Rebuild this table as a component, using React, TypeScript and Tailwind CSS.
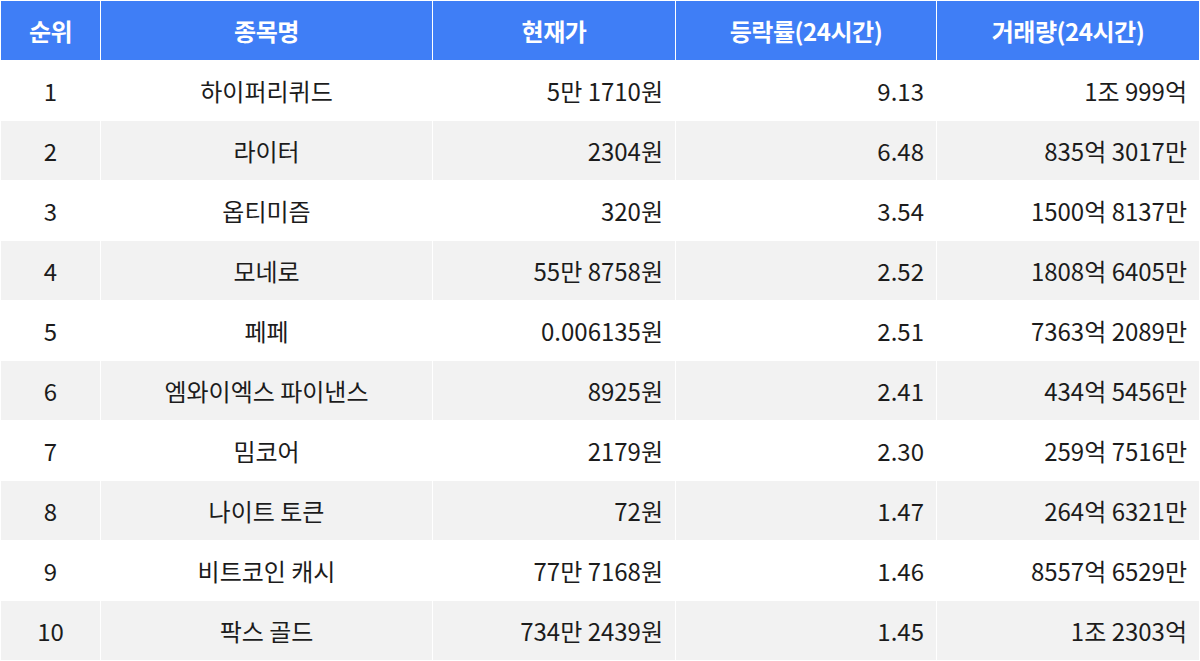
const rows = [
  { rank: 1, name: "하이퍼리퀴드", price: "5만 1710원", change: "9.13", volume: "1조 999억" },
  { rank: 2, name: "라이터", price: "2304원", change: "6.48", volume: "835억 3017만" },
  { rank: 3, name: "옵티미즘", price: "320원", change: "3.54", volume: "1500억 8137만" },
  { rank: 4, name: "모네로", price: "55만 8758원", change: "2.52", volume: "1808억 6405만" },
  { rank: 5, name: "페페", price: "0.006135원", change: "2.51", volume: "7363억 2089만" },
  { rank: 6, name: "엠와이엑스 파이낸스", price: "8925원", change: "2.41", volume: "434억 5456만" },
  { rank: 7, name: "밈코어", price: "2179원", change: "2.30", volume: "259억 7516만" },
  { rank: 8, name: "나이트 토큰", price: "72원", change: "1.47", volume: "264억 6321만" },
  { rank: 9, name: "비트코인 캐시", price: "77만 7168원", change: "1.46", volume: "8557억 6529만" },
  { rank: 10, name: "팍스 골드", price: "734만 2439원", change: "1.45", volume: "1조 2303억" },
];

const headers = ["순위", "종목명", "현재가", "등락률(24시간)", "거래량(24시간)"];
const grid = "grid grid-cols-[99px_331px_242px_260px_1fr] gap-px px-px";

export default function App() {
  return (
    <div
      className="flex h-[661px] w-[1200px] flex-col gap-px bg-white pt-px text-[24px] text-[#1c1c1c]"
      style={{ fontFamily: '"Noto Sans CJK KR", "Noto Sans", sans-serif' }}
    >
      <div className={grid}>
        {headers.map((h) => (
          <div
            key={h}
            className="flex h-[59px] items-center justify-center bg-[#3f7ef6] font-bold tracking-[-0.02em] text-white"
          >
            {h}
          </div>
        ))}
      </div>
      {rows.map((r, i) => {
        const bg = i % 2 === 0 ? "bg-white" : "bg-[#f2f2f2]";
        return (
          <div key={r.rank} className={grid}>
            <div className={`flex h-[59px] items-center justify-center ${bg}`}>{r.rank}</div>
            <div className={`flex h-[59px] items-center justify-center ${bg}`}>{r.name}</div>
            <div className={`flex h-[59px] items-center justify-end pr-3 ${bg}`}>{r.price}</div>
            <div className={`flex h-[59px] items-center justify-end pr-3 ${bg}`}>{r.change}</div>
            <div className={`flex h-[59px] items-center justify-end pr-3 ${bg}`}>{r.volume}</div>
          </div>
        );
      })}
    </div>
  );
}
